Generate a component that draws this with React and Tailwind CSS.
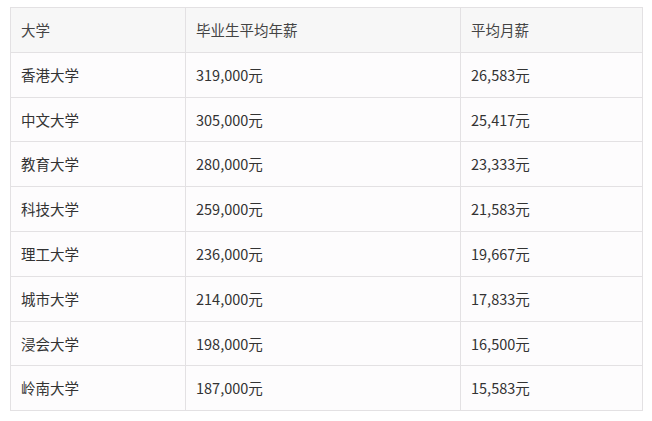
const ROWS = [
  ['香港大学', '319,000元', '26,583元'],
  ['中文大学', '305,000元', '25,417元'],
  ['教育大学', '280,000元', '23,333元'],
  ['科技大学', '259,000元', '21,583元'],
  ['理工大学', '236,000元', '19,667元'],
  ['城市大学', '214,000元', '17,833元'],
  ['浸会大学', '198,000元', '16,500元'],
  ['岭南大学', '187,000元', '15,583元'],
]

const cell = 'border border-[#e3e1e3] px-[10px] h-[44.8px] align-middle text-left font-normal'

export default function App() {
  return (
    <div
      className="w-[652px] h-[421px] bg-white pl-[10px] pt-[7px] text-[14.5px] text-[#333]"
      style={{ fontFamily: '"Noto Sans CJK SC", "Noto Sans", sans-serif' }}
    >
      <table className="border-collapse table-fixed w-[632px]">
        <colgroup>
          <col className="w-[175px]" />
          <col className="w-[275px]" />
          <col className="w-[182px]" />
        </colgroup>
        <thead>
          <tr className="bg-[#f7f7f7] text-[#444]">
            <th className={cell}>大学</th>
            <th className={cell}>毕业生平均年薪</th>
            <th className={cell}>平均月薪</th>
          </tr>
        </thead>
        <tbody className="bg-[#fdfcfd]">
          {ROWS.map((r) => (
            <tr key={r[0]}>
              {r.map((v, i) => (
                <td key={i} className={cell}>{v}</td>
              ))}
            </tr>
          ))}
        </tbody>
      </table>
    </div>
  )
}
